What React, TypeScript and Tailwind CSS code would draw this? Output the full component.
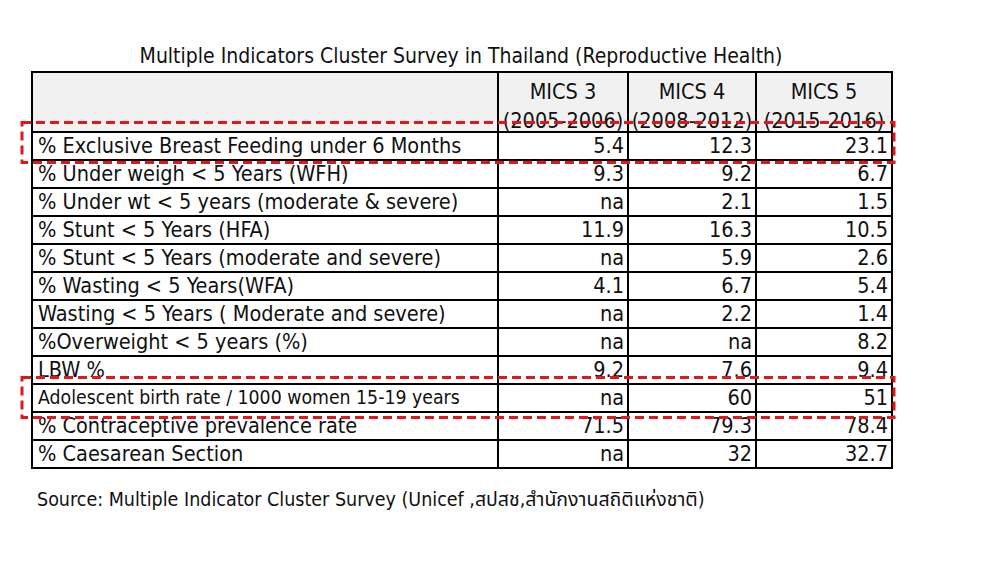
import React from "react";

type Row = { label: string; small?: boolean; values: [string, string, string] };

const rows: Row[] = [
  { label: "% Exclusive Breast Feeding under 6 Months", values: ["5.4", "12.3", "23.1"] },
  { label: "% Under weigh < 5 Years (WFH)", values: ["9.3", "9.2", "6.7"] },
  { label: "% Under wt < 5 years (moderate & severe)", values: ["na", "2.1", "1.5"] },
  { label: "% Stunt < 5 Years (HFA)", values: ["11.9", "16.3", "10.5"] },
  { label: "% Stunt < 5 Years (moderate and severe)", values: ["na", "5.9", "2.6"] },
  { label: "% Wasting < 5 Years(WFA)", values: ["4.1", "6.7", "5.4"] },
  { label: "Wasting < 5 Years ( Moderate and severe)", values: ["na", "2.2", "1.4"] },
  { label: "%Overweight < 5 years (%)", values: ["na", "na", "8.2"] },
  { label: "LBW %", values: ["9.2", "7.6", "9.4"] },
  { label: "Adolescent birth rate / 1000 women 15-19 years", small: true, values: ["na", "60", "51"] },
  { label: "% Contraceptive prevalence rate", values: ["71.5", "79.3", "78.4"] },
  { label: "% Caesarean Section", values: ["na", "32", "32.7"] },
];

const headers = [
  ["MICS 3", "(2005-2006)"],
  ["MICS 4", "(2008-2012)"],
  ["MICS 5", "(2015-2016)"],
];

function DashedBox({ className }: { className: string }) {
  return (
    <svg className={`absolute pointer-events-none ${className}`} width="878" height="43" viewBox="0 0 878 43">
      <rect x="4" y="1.5" width="872" height="40" fill="none" stroke="#e3161c" strokeWidth="3" strokeDasharray="9 5" />
    </svg>
  );
}

export default function App() {
  return (
    <div
      className="relative w-[999px] h-[562px] bg-white text-[#111]"
      style={{ fontFamily: '"DejaVu Sans Condensed", "DejaVu Sans", Tahoma, sans-serif' }}
    >
      <div className="flex flex-col pl-[31px] pt-[42px]">
        <div className="w-[860px] text-center text-[21px] leading-[29px]">
          Multiple Indicators Cluster Survey in Thailand (Reproductive Health)
        </div>
        <table className="border-collapse w-[860px] table-fixed text-[21.5px]">
          <colgroup>
            <col className="w-[466px]" />
            <col className="w-[130px]" />
            <col className="w-[128px]" />
            <col className="w-[136px]" />
          </colgroup>
          <thead>
            <tr className="h-[60px] bg-[#f1f1f1]">
              <th className="border-2 border-black" />
              {headers.map(([a, b]) => (
                <th key={a} className="border-2 border-black font-normal align-bottom p-0 leading-[29px] whitespace-nowrap">
                  <div>{a}</div>
                  <div className="-mb-[4px]">{b}</div>
                </th>
              ))}
            </tr>
          </thead>
          <tbody>
            {rows.map((r) => (
              <tr key={r.label} className="h-[28px]">
                <td
                  className={`border-2 border-black px-[5px] py-0 leading-[24px] whitespace-nowrap ${r.small ? "text-[19.3px]" : ""}`}
                >
                  {r.label}
                </td>
                {r.values.map((v, i) => (
                  <td key={i} className="border-2 border-black text-right pr-[3px] py-0 leading-[24px]">
                    {v}
                  </td>
                ))}
              </tr>
            ))}
          </tbody>
        </table>
        <div
          className="pt-[16px] pl-[6px] text-[19.5px]"
          style={{ fontFamily: '"DejaVu Sans Condensed", Tahoma, "Liberation Sans", "Noto Sans Thai", sans-serif' }}
        >
          Source: Multiple Indicator Cluster Survey (Unicef ,สปสช,สำนักงานสถิติแห่งชาติ)
        </div>
      </div>
      <DashedBox className="left-[18px] top-[121px]" />
      <DashedBox className="left-[18px] top-[376px]" />
    </div>
  );
}
